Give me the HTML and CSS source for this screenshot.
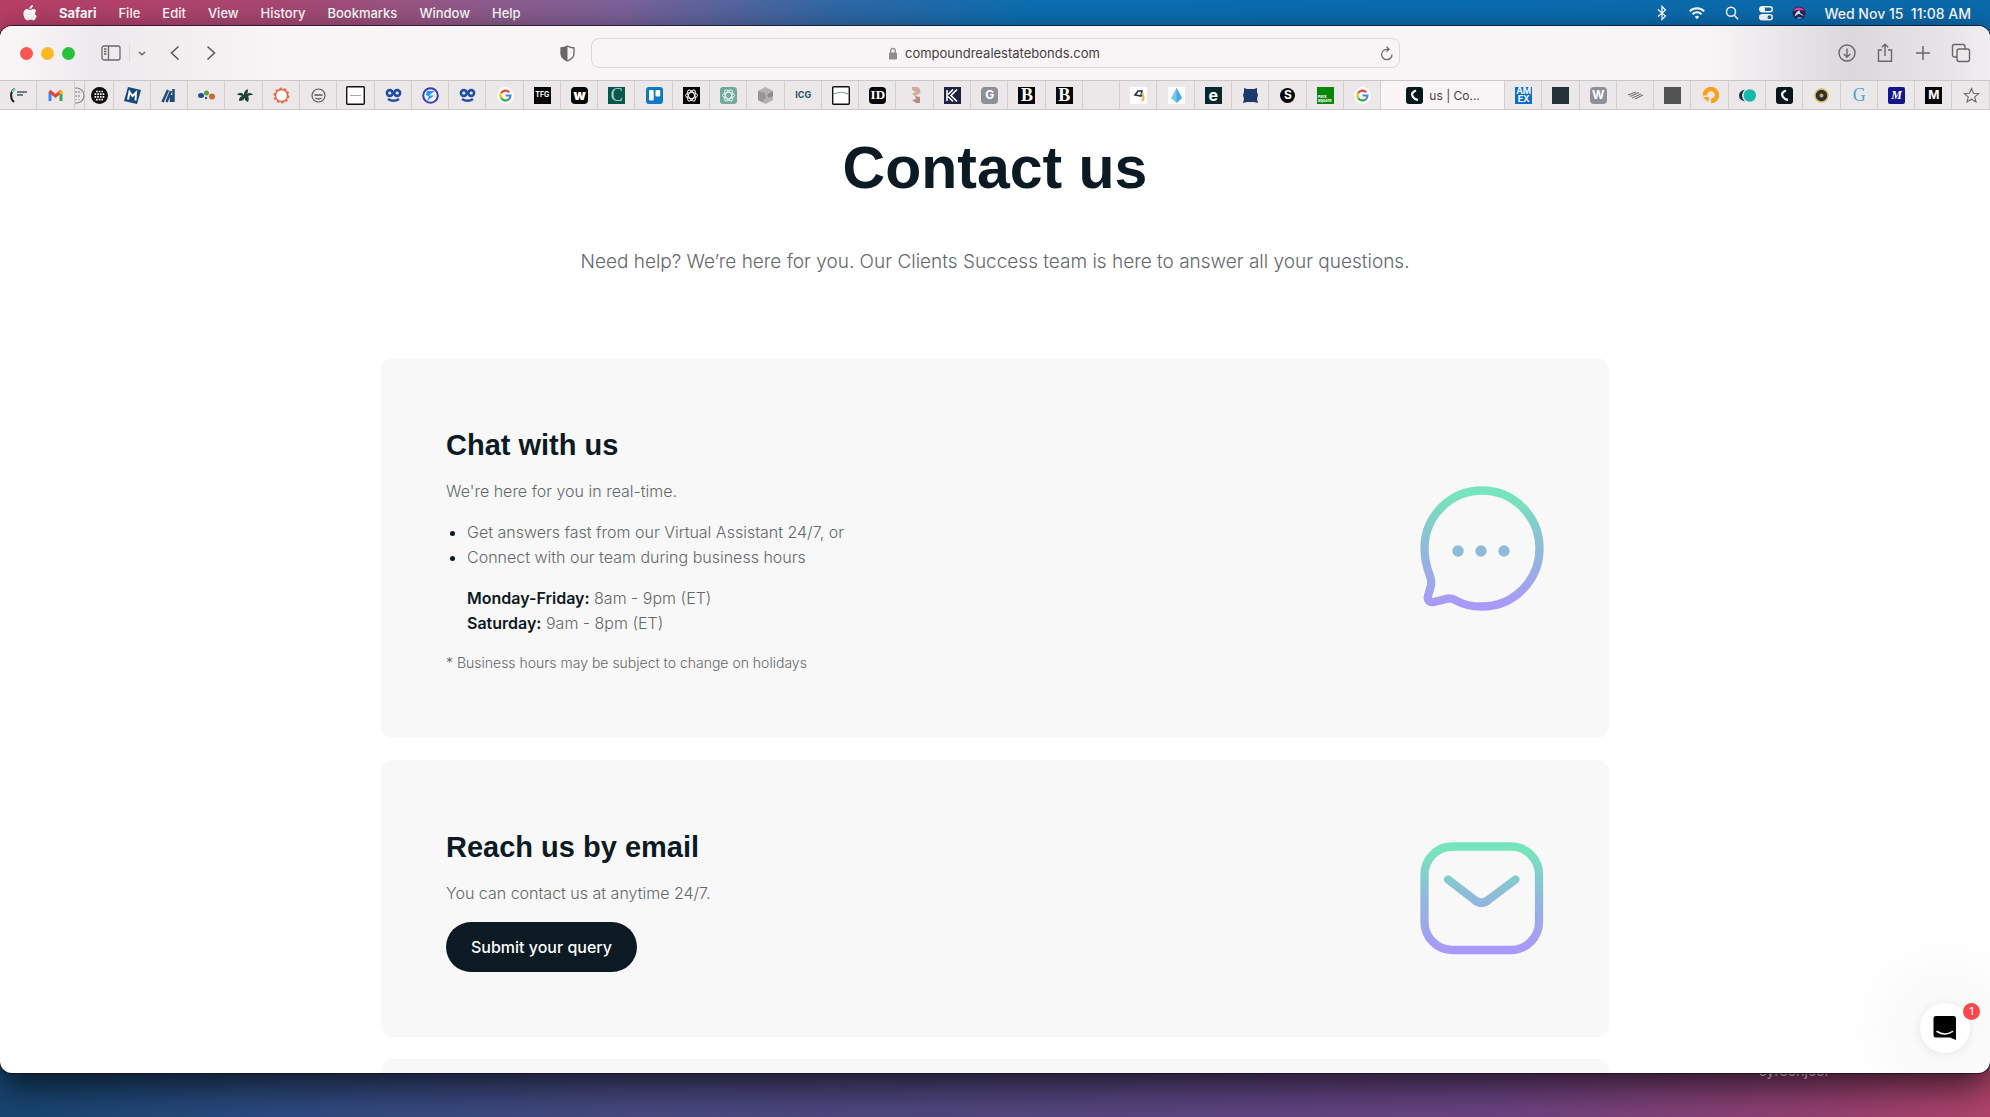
FILE: index.html
```html
<!DOCTYPE html>
<html lang="en">
<head>
<meta charset="utf-8">
<title>Contact us | Compound</title>
<link rel="stylesheet" href="styles.css">
</head>
<body>
<div class="desktop">
  <header class="menubar">
    <nav class="menus">
      <button class="menu" aria-label="Apple"><svg width="14" height="17" viewBox="0 0 14 17" fill="#fff"><path d="M9.900 0c.1 1.200-.4 2.200-1 2.900-.6.700-1.500 1.200-2.400 1.100C6.400 2.900 6.900 1.900 7.500 1.200 8.100.5 9.100.1 9.900 0ZM13.300 5.800c-1.800 1.200-1.700 4.200.5 5.100-.5 1.500-1.800 4.500-3.500 4.500-1.100 0-1.500-.7-2.800-.7s-1.800.7-2.800.7C2.600 15.500.4 11.800.4 8.700c0-3 1.900-4.600 3.700-4.600 1.200 0 2.200.8 3 .8.700 0 1.900-.9 3.300-.9 1.100 0 2.200.6 2.900 1.800Z"/></svg></button>
      <button class="menu menu-app">Safari</button>
      <button class="menu">File</button>
      <button class="menu">Edit</button>
      <button class="menu">View</button>
      <button class="menu">History</button>
      <button class="menu">Bookmarks</button>
      <button class="menu">Window</button>
      <button class="menu">Help</button>
    </nav>
    <div class="status">
      <svg width="16" height="16" viewBox="0 0 16 16" fill="none" stroke="#fff" stroke-width="1.300"><path d="M4 4.500l7.500 6.500L8 14.500v-13L11.500 5 4 11.500"/></svg>
      <svg width="18" height="14" viewBox="0 0 16 14" fill="none" stroke="#fff" stroke-width="2"><path d="M.8 5.200a10.300 10.300 0 0 1 14.400 0M3.500 8.200a6.400 6.400 0 0 1 9 0"/><path d="M8 13.200 5.700 10.800a3.300 3.300 0 0 1 4.600 0Z" fill="#fff" stroke="none"/></svg>
      <svg width="16" height="16" viewBox="0 0 16 16" fill="none" stroke="#fff" stroke-width="1.500"><circle cx="7" cy="6.800" r="4.500"/><path d="m10.300 10.300 3.700 4"/></svg>
      <svg width="16" height="16" viewBox="0 0 16 16"><rect x="1.700" y="1.700" width="12.600" height="5" rx="2.500" fill="none" stroke="#fff" stroke-width="1.400"/><circle cx="4.500" cy="4.200" r="2.500" fill="#fff"/><rect x="1" y="9" width="14" height="6.400" rx="3.200" fill="#fff"/><circle cx="11.500" cy="12.200" r="1.900" fill="#0c6cad"/></svg>
      <svg width="14" height="16" viewBox="0 0 16 16"><circle cx="8" cy="8" r="7.500" fill="#2b2358"/><path d="M1.500 6C3 1 11 0 14.300 5.500 11 4.500 5 4 1.500 6Z" fill="#e2409b"/><path d="M3 12c1-5 4-7 6-7-1 3 2 4 5 6-3 0-4-2-6-2s-3 2-5 3Z" fill="#d9f4ff"/><path d="M5 14c2-2 5-2 7-.5-2 1.900-5 2-7 .5Z" fill="#35a6e8"/></svg>
      <time>Wed Nov 15&nbsp; 11:08 AM</time>
    </div>
  </header>

  <div class="desktop-item">cyroonjoor</div>

  <section class="window">
    <div class="toolbar">
      <div class="toolbar-left">
        <div class="lights"><button class="light close" aria-label="Close"></button><button class="light minimise" aria-label="Minimise"></button><button class="light zoom" aria-label="Zoom"></button></div>
        <div class="sidebar-tools">
          <button class="tool" aria-label="Sidebar"><svg width="20" height="16" viewBox="0 0 20 16" fill="none" stroke="#6a6668" stroke-width="1.300"><rect x="1" y="1" width="18" height="14" rx="2"/><path d="M7.500 1v14M3 4h2.500M3 6.500h2.500M3 9h2.500"/></svg></button>
          <span class="rule"></span>
          <button class="tool" aria-label="Tab groups"><svg width="8" height="5" viewBox="0 0 8 5" fill="none" stroke="#6a6668" stroke-width="1.500"><path d="m1 1 3 2.700L7 1"/></svg></button>
        </div>
        <div class="history-tools">
          <button class="tool" aria-label="Back"><svg width="10" height="16" viewBox="0 0 10 16" fill="none" stroke="#5d595b" stroke-width="1.600"><path d="M8.500 1.500 1.500 8l7 6.500"/></svg></button>
          <button class="tool" aria-label="Forward"><svg width="10" height="16" viewBox="0 0 10 16" fill="none" stroke="#5d595b" stroke-width="1.600"><path d="m1.500 1.500 7 6.500-7 6.500"/></svg></button>
        </div>
        <button class="tool privacy" aria-label="Privacy report"><svg width="15" height="17" viewBox="0 0 15 17"><path d="M7.500 1C5.500 2.300 3.500 2.800 1 3v5.500c0 3.500 3 6 6.500 7.500C11 14.500 14 12 14 8.500V3c-2.500-.2-4.500-.7-6.500-2Z" fill="none" stroke="#6a6668" stroke-width="1.300"/><path d="M7.500 1C5.500 2.300 3.500 2.800 1 3v5.500c0 3.500 3 6 6.500 7.500Z" fill="#6a6668"/></svg></button>
      </div>
      <form class="address">
        <svg class="lock" width="10" height="13" viewBox="0 0 10 13"><rect x="1" y="5.500" width="8" height="7" rx="1.200" fill="#8f8b8d"/><path d="M2.700 6V3.600a2.300 2.300 0 0 1 4.600 0V6" fill="none" stroke="#8f8b8d" stroke-width="1.300"/></svg>
        <input type="text" aria-label="Address" value="compoundrealestatebonds.com">
        <button type="button" class="tool reload" aria-label="Reload"><svg width="14" height="15" viewBox="0 0 14 15" fill="none" stroke="#6a6668" stroke-width="1.200"><path d="M12 8.200A5.200 5.200 0 1 1 6.800 3.300h2M6.500.8l2.600 2.500-2.600 2.500"/></svg></button>
      </form>
      <div class="toolbar-right">
        <button class="tool" aria-label="Downloads"><svg width="20" height="20" viewBox="0 0 20 20" fill="none" stroke="#6a6668" stroke-width="1.400"><circle cx="10" cy="10" r="8"/><path d="M10 5.500v8.500M6.800 11l3.200 3.200L13.200 11"/></svg></button>
        <button class="tool" aria-label="Share"><svg width="20" height="20" viewBox="0 0 20 20" fill="none" stroke="#6a6668" stroke-width="1.400"><path d="M7 7H3.500v11.300h13V7H13M10 13V1.300M6.800 4.300 10 1.200l3.200 3.100"/></svg></button>
        <button class="tool" aria-label="New tab"><svg width="20" height="20" viewBox="0 0 20 20" fill="none" stroke="#6a6668" stroke-width="1.500"><path d="M10 3v14M3 10h14"/></svg></button>
        <button class="tool" aria-label="Show all tabs"><svg width="20" height="20" viewBox="0 0 20 20" fill="none" stroke="#6a6668" stroke-width="1.400"><rect x="6" y="6" width="12.500" height="12.500" rx="2"/><path d="M6 14H3.500a2 2 0 0 1-2-2V3.500a2 2 0 0 1 2-2H12a2 2 0 0 1 2 2V6"/></svg></button>
      </div>
    </div>

    <nav class="tabs">
      <button class="tab"><svg width="17" height="17" viewBox="0 0 17 17"><path d="M5 2C0 4 0 12 4 15" fill="none" stroke="#1c1f22" stroke-width="2"/><path d="M5 2 2 5" stroke="#7cdcc0" stroke-width="2"/><path d="M7 5h10M7 8h6" stroke="#4b5a5c" stroke-width="1.600"/></svg></button>
      <button class="tab"><svg width="17" height="17" viewBox="0 0 17 17" fill="none" stroke-width="3"><path d="M3 14V5" stroke="#4285f4"/><path d="M14 14V5" stroke="#34a853"/><path d="m2.500 4 6 5 6-5" stroke="#ea4335"/><path d="M14 7V4" stroke="#fbbc04"/></svg></button>
      <button class="tab tab-clipped"><svg width="17" height="17" viewBox="0 0 17 17" fill="none" stroke="#8b8789" stroke-width="1.200"><circle cx="8.500" cy="8.500" r="7.500"/><path d="M8 4v9M11 4v9" stroke-dasharray="2 2"/></svg></button>
      <button class="tab tab-narrow"><svg width="17" height="17" viewBox="0 0 17 17"><circle cx="8.500" cy="8.500" r="8.500" fill="#0c0c0c"/><path d="M5 4.500h7M3.500 7.200h10M3.500 9.900h10M5 12.600h7" stroke="#fff" stroke-width="1.700" stroke-dasharray="1.700 1"/></svg></button>
      <button class="tab"><svg width="17" height="17" viewBox="0 0 17 17"><path d="m4 0 13 3-4 14-13-3Z" fill="#164a7c"/><path d="M4 12.500 5.500 5l3 4L12 5.500l-.5 8" fill="none" stroke="#fff" stroke-width="2"/></svg></button>
      <button class="tab"><svg width="17" height="17" viewBox="0 0 17 17" stroke="#1d4e79" stroke-width="2.500"><path d="M1.500 15 7 3M5.500 15 10 4M10 15V8M12.500 2v13"/></svg></button>
      <button class="tab"><svg width="17" height="17" viewBox="0 0 17 17"><ellipse cx="3" cy="8.500" rx="3" ry="2.500" fill="#1e4f8f"/><circle cx="8.500" cy="6" r="2.500" fill="#57a33b"/><ellipse cx="14" cy="9.500" rx="3" ry="3" fill="#c86b32"/><circle cx="8" cy="11" r="1.200" fill="#1e4f8f"/></svg></button>
      <button class="tab"><svg width="17" height="17" viewBox="0 0 17 17" fill="#1f4435"><path d="M1 8c2-3 5-3 7 0 0-4 2-5 4-6 0 2 0 3-1 5 2-2 5-1 6 1-2 0-4 0-5 1 1 1 1 4 0 6-3-1-4-3-3-5-1 3-3 4-6 4 0-3 1-4 3-5-1-.7-3-1-5-1Z"/></svg></button>
      <button class="tab"><svg width="17" height="17" viewBox="0 0 17 17"><circle cx="8.500" cy="8.500" r="6" fill="#fff" stroke="#e8663c" stroke-width="1.500"/><circle cx="8.500" cy="8.500" r="7.200" fill="none" stroke="#e8663c" stroke-width="1.500" stroke-dasharray="2.500 2"/></svg></button>
      <button class="tab"><svg width="15" height="15" viewBox="0 0 15 15"><circle cx="7.500" cy="7.500" r="6.500" fill="#eee9eb" stroke="#555" stroke-width="1.100"/><path d="M3.500 7h8M4.500 10q3 2 6 0" fill="none" stroke="#555" stroke-width="1.400"/></svg></button>
      <button class="tab"><svg width="19" height="19" viewBox="0 0 19 19"><rect x=".7" y=".7" width="17.600" height="17.600" rx="1" fill="#fff" stroke="#111" stroke-width="1.400"/><path d="M4 9.500h11" stroke="#aaa"/></svg></button>
      <button class="tab"><svg width="17" height="17" viewBox="0 0 17 17" fill="none" stroke="#1f4fa3" stroke-width="2.600"><circle cx="4.800" cy="6" r="2.900"/><circle cx="12.200" cy="6" r="2.900"/><path d="M3 12q5.500 3.500 11 0"/></svg></button>
      <button class="tab"><svg width="17" height="17" viewBox="0 0 17 17"><circle cx="8.500" cy="8.500" r="7.300" fill="#f3f0ff" stroke="#3c35c9" stroke-width="2"/><path d="M5 4h7.500L7 8.500h5L5 14l2-4.500L4 8Z" fill="#1e9cf0"/></svg></button>
      <button class="tab"><svg width="17" height="17" viewBox="0 0 17 17" fill="none" stroke="#1f4fa3" stroke-width="2.600"><circle cx="4.800" cy="6" r="2.900"/><circle cx="12.200" cy="6" r="2.900"/><path d="M3 12q5.500 3.500 11 0"/></svg></button>
      <button class="tab"><svg width="17" height="17" viewBox="0 0 17 17" fill="none" stroke-width="2.200"><circle cx="8.500" cy="8.500" r="8.500" fill="#fff"/><path d="M12.200 5.200A5 5 0 0 0 4.200 6" stroke="#ea4335"/><path d="M4.200 6a5 5 0 0 0 0 5" stroke="#fbbc05"/><path d="M4.200 11a5 5 0 0 0 7.500 1.300" stroke="#34a853"/><path d="M11.700 12.300a5 5 0 0 0 1.800-3.800H8.500" stroke="#4285f4"/></svg></button>
      <button class="tab"><span class="fav black tiny">TFG</span></button>
      <button class="tab"><span class="fav black round heavy">w</span></button>
      <button class="tab"><span class="fav teal serif">C</span></button>
      <button class="tab"><svg width="17" height="17" viewBox="0 0 17 17"><rect width="17" height="17" rx="3" fill="#0c7ac7"/><rect x="3" y="3" width="4.700" height="10.500" rx="1" fill="#fff"/><rect x="9.500" y="3" width="4.700" height="6.500" rx="1" fill="#fff"/></svg></button>
      <button class="tab"><svg width="17" height="17" viewBox="0 0 17 17"><rect width="17" height="17" fill="#050505"/><g fill="none" stroke="#fff" stroke-width="1"><ellipse cx="8.500" cy="8.500" rx="6" ry="3"/><ellipse cx="8.500" cy="8.500" rx="6" ry="3" transform="rotate(60 8.500 8.500)"/><ellipse cx="8.500" cy="8.500" rx="6" ry="3" transform="rotate(120 8.500 8.500)"/></g></svg></button>
      <button class="tab"><svg width="17" height="17" viewBox="0 0 17 17"><rect width="17" height="17" rx="3" fill="#74aa9c"/><g fill="none" stroke="#e9f6f1" stroke-width="1"><ellipse cx="8.500" cy="8.500" rx="6" ry="3"/><ellipse cx="8.500" cy="8.500" rx="6" ry="3" transform="rotate(60 8.500 8.500)"/><ellipse cx="8.500" cy="8.500" rx="6" ry="3" transform="rotate(120 8.500 8.500)"/></g></svg></button>
      <button class="tab"><svg width="17" height="17" viewBox="0 0 17 17"><path d="m8.500 0 7.500 4v9l-7.500 4L1 13V4Z" fill="#b5b1b2"/><path d="m1 4 7 2 1 5-4 4-4-2Z" fill="#999597"/><path d="m10 8 6-4v5l-4 2Z" fill="#8c888a"/></svg></button>
      <button class="tab"><span class="fav wordmark">ICG</span></button>
      <button class="tab"><svg width="18" height="19" viewBox="0 0 18 19"><rect x=".7" y=".7" width="16.600" height="17.600" rx="1" fill="#fff" stroke="#111" stroke-width="1.400"/><path d="M2 8q7-3.500 14 0" fill="none" stroke="#7e9db5" stroke-width="1.200"/></svg></button>
      <button class="tab"><span class="fav black round slab">ID</span></button>
      <button class="tab"><svg width="17" height="17" viewBox="0 0 17 17"><path d="M5 0h4a4 4 0 0 1 3 7L8 9 5 7l4-2-4-2Z" fill="#d2a99d"/><path d="m8 9 5 1v6H9l-4-3 4-1Z" fill="#b98a7f"/></svg></button>
      <button class="tab"><svg width="17" height="17" viewBox="0 0 17 17"><rect width="17" height="17" fill="#1e2340"/><path d="M3 3v11M13 2.500 7 8.500l6 6M9 2.500 4 7.500M9 14.500 4 9.500" fill="none" stroke="#fff" stroke-width="1.600"/></svg></button>
      <button class="tab"><span class="fav grey round">G</span></button>
      <button class="tab"><span class="fav black serif bold">B</span></button>
      <button class="tab"><span class="fav black serif bold">B</span></button>
      <button class="tab" aria-label="Untitled"></button>
      <button class="tab"><svg width="17" height="17" viewBox="0 0 17 17"><rect width="17" height="17" fill="#fff"/><path d="m5 8 3-4 4 0-1 5Z" fill="none" stroke="#20304a" stroke-width="1.600"/><path d="M12 6q3 5 0 8" fill="none" stroke="#f4b53f" stroke-width="2.200"/></svg></button>
      <button class="tab"><svg width="17" height="17" viewBox="0 0 17 17"><rect width="17" height="17" fill="#fff"/><path d="m8.500 1 5.500 10-5.500 5L3 11Z" fill="#7cc7ee"/><path d="m8.500 1 5.500 10-5.500 5Z" fill="#4aa9dc"/></svg></button>
      <button class="tab"><span class="fav ink">e</span></button>
      <button class="tab"><svg width="17" height="17" viewBox="0 0 17 17"><path d="m2 1 3 1h7l3-1v4l1 3-1 4 1 4-4-1H5l-4 1 1-4-1-4 1-3Z" fill="#1d3a6c"/></svg></button>
      <button class="tab"><span class="fav black disc">S</span></button>
      <button class="tab"><span class="fav green"><span>Park</span><span>Square</span></span></button>
      <button class="tab"><svg width="17" height="17" viewBox="0 0 17 17" fill="none" stroke-width="2.200"><circle cx="8.500" cy="8.500" r="8.500" fill="#fff"/><path d="M12.200 5.200A5 5 0 0 0 4.200 6" stroke="#ea4335"/><path d="M4.200 6a5 5 0 0 0 0 5" stroke="#fbbc05"/><path d="M4.200 11a5 5 0 0 0 7.500 1.300" stroke="#34a853"/><path d="M11.700 12.300a5 5 0 0 0 1.800-3.800H8.500" stroke="#4285f4"/></svg></button>
      <button class="tab tab-active"><svg width="17" height="17" viewBox="0 0 17 17"><rect width="17" height="17" rx="3" fill="#07171c"/><path d="M10 3.500Q4 6 7 10q1.500 2.500 5 3" fill="none" stroke="#e8f4f2" stroke-width="2.400"/></svg>us | Co...</button>
      <button class="tab"><span class="fav blue"><span>AM</span><span>EX</span></span></button>
      <button class="tab"><span class="fav slate"></span></button>
      <button class="tab"><span class="fav grey round">W</span></button>
      <button class="tab"><svg width="17" height="17" viewBox="0 0 17 17" stroke="#77757a" stroke-width="1.200"><path d="m1 8 8-3M3 9.500l9-4M5 11l9-4M8 12l8-4"/></svg></button>
      <button class="tab"><span class="fav stone"></span></button>
      <button class="tab"><svg width="17" height="17" viewBox="0 0 17 17"><path d="M3 8.500A6 6 0 1 1 9 14" fill="none" stroke="#f9a11b" stroke-width="4.500"/><path d="M1 10h6l-1 5Z" fill="#f9a11b"/></svg></button>
      <button class="tab"><svg width="17" height="17" viewBox="0 0 17 17"><path d="M6 2.500Q0 4 0 8.500T6 14.500Q3 12 3 8.500t3-6Z" fill="#15323a"/><circle cx="10.800" cy="8.500" r="6.200" fill="#14b8ac"/></svg></button>
      <button class="tab"><svg width="17" height="17" viewBox="0 0 17 17"><rect width="17" height="17" rx="3" fill="#07171c"/><path d="M10 3.500Q4 6 7 10q1.500 2.500 5 3" fill="none" stroke="#e8f4f2" stroke-width="2.400"/></svg></button>
      <button class="tab"><svg width="17" height="17" viewBox="0 0 17 17"><circle cx="8.500" cy="8.500" r="6.500" fill="#2c2e3c" stroke="#d5bf4e" stroke-width="1.500"/><circle cx="8.500" cy="8.500" r="2" fill="#c7b04c"/></svg></button>
      <button class="tab"><span class="fav sky serif">G</span></button>
      <button class="tab"><span class="fav navy">M</span></button>
      <button class="tab"><span class="fav black">M</span></button>
      <button class="tab"><svg width="17" height="16" viewBox="0 0 17 16" fill="none" stroke="#6a6668" stroke-width="1.100"><path d="m8.500 1.500 2 4.700 5.200.4-4 3.300 1.300 5-4.500-2.700L4 14.900l1.300-5-4-3.300 5.200-.4Z"/></svg></button>
    </nav>

    <main class="page">
      <h1>Contact us</h1>
      <p class="lead">Need help? We’re here for you. Our Clients Success team is here to answer all your questions.</p>
      <div class="cards">
        <article class="card">
          <div>
            <h2>Chat with us</h2>
            <p>We're here for you in real-time.</p>
            <ul>
              <li><span>Get answers fast from our Virtual Assistant 24/7, or</span></li>
              <li><span>Connect with our team during business hours</span></li>
            </ul>
            <p class="hours"><b>Monday-Friday:</b> 8am - 9pm (ET)<br><b>Saturday:</b> 9am - 8pm (ET)</p>
            <p class="note">* Business hours may be subject to change on holidays</p>
          </div>
          <svg width="124" height="125" viewBox="0 0 124 125" fill="none">
            <defs><linearGradient id="chat-ink" gradientUnits="userSpaceOnUse" x1="0" y1="4" x2="0" y2="120"><stop offset=".05" stop-color="#76e5bb"/><stop offset=".45" stop-color="#8cbfd6"/><stop offset="1" stop-color="#aa98fa"/></linearGradient></defs>
            <path d="M4.500 62.500A57.500 58 0 1 1 62 120.500C52 120.500 44 119 37 115 33 112.500 30 111.500 26 113L14 116C9.500 117 7 114 8 110L11 99C11.500 96 11 93 10 90 6.500 81 4.500 72 4.500 62.500Z" stroke="url(#chat-ink)" stroke-width="8.300"/>
            <g fill="#8fbbdb"><circle cx="38" cy="65" r="5.700"/><circle cx="61" cy="65" r="5.700"/><circle cx="84" cy="65" r="5.700"/></g>
          </svg>
        </article>
        <article class="card">
          <div>
            <h2>Reach us by email</h2>
            <p>You can contact us at anytime 24/7.</p>
            <button class="submit">Submit your query</button>
          </div>
          <svg width="124" height="113" viewBox="0 0 124 113" fill="none" stroke="url(#mail-ink)" stroke-width="8.300">
            <defs><linearGradient id="mail-ink" gradientUnits="userSpaceOnUse" x1="0" y1="4" x2="0" y2="108"><stop offset=".05" stop-color="#76e5bb"/><stop offset=".5" stop-color="#8fb9dc"/><stop offset="1" stop-color="#aa98fa"/></linearGradient></defs>
            <rect x="4.500" y="4.500" width="114.500" height="103.500" rx="28"/>
            <path d="M28 37.500 54 57.500Q61.500 64 69 57.500L95.500 37.500" stroke-linecap="round"/>
          </svg>
        </article>
        <article class="card"></article>
      </div>
      <button class="messenger" aria-label="Open messenger">
        <svg width="24" height="26" viewBox="0 0 24 26"><path d="M3 1h17.500a2.500 2.500 0 0 1 2.500 2.500V25l-6-2.500H3A2.500 2.500 0 0 1 .5 20V3.500A2.500 2.500 0 0 1 3 1Z"/><path d="M4 16.500q8 5 15.500 0" fill="none" stroke="#fff" stroke-width="1.500" stroke-linecap="round"/></svg>
        <span class="badge">1</span>
      </button>
    </main>
  </section>
</div>
</body>
</html>
```
FILE: styles.css
```css
* { box-sizing: border-box; }
body { margin: 0; font-family: Inter, "Liberation Sans", sans-serif; }
button, input { font: inherit; color: inherit; border: 0; padding: 0; background: none; }
h1, h2, p, ul { margin: 0; padding: 0; }
h1, h2 { font-family: "Liberation Sans", Arial, sans-serif; font-weight: 700; }
svg { display: block; flex: none; }

.desktop {
  position: relative;
  display: flex;
  flex-direction: column;
  height: 100vh;
  padding-bottom: 44px;
  overflow: hidden;
  background:
    linear-gradient(90deg, #b83f66 0, #a94872 14%, #8f5b8c 24%, #7d6299 31%, #2f69a6 42%, #0b6fb2 52%, #0b6aac 100%) top / 100% 40px no-repeat,
    linear-gradient(90deg, #174571 0, #2c4a80 14%, #48497f 32%, #50477f 48%, #6a4382 75%, #954070 92%, #b0446a 100%);
}

/* Menu bar */
.menubar {
  display: flex;
  justify-content: space-between;
  align-items: center;
  height: 26px;
  padding: 0 19px 0 23px;
  color: #fff;
  font-size: 13px;
  font-weight: 500;
}
.menus { display: flex; align-items: center; gap: 22px; }
.menu-app { font-weight: 700; }
.status { display: flex; align-items: center; gap: 18px; font-size: 14px; }

.desktop-item {
  position: absolute;
  right: 160px;
  bottom: 38px;
  color: #fff;
  font-size: 14px;
  line-height: 16px;
}

/* Browser window */
.window {
  position: relative;
  display: flex;
  flex-direction: column;
  flex: 1;
  min-height: 0;
  overflow: hidden;
  border-radius: 12px;
  background: #fff;
  box-shadow: 0 0 0 1px rgba(20, 10, 30, .7), 0 12px 36px rgba(0, 0, 0, .7);
}
.toolbar {
  display: grid;
  grid-template-columns: 591fr 809fr 590fr;
  align-items: center;
  height: 54px;
  flex: none;
  background:
    linear-gradient(90deg, transparent 1%, rgba(226, 222, 226, .5) 5%, transparent 14%),
    linear-gradient(90deg, transparent 86%, #dcd7dc 93%, #e9e4e8 98%, #f2edf0 100%) #f9f4f6;
}
.toolbar-left { display: flex; align-items: center; padding: 0 16px 0 20px; }
.lights { display: flex; gap: 8px; }
.light { width: 13px; height: 13px; border-radius: 50%; }
.close { background: #fc5650; }
.minimise { background: #fdb827; }
.zoom { background: #28c13c; }
.sidebar-tools { display: flex; align-items: center; gap: 8px; margin-left: 26px; }
.rule { width: 1px; height: 18px; background: #ded9db; }
.history-tools { display: flex; gap: 26px; margin-left: 24px; }
.privacy { margin-left: auto; }
.address {
  position: relative;
  display: flex;
  justify-content: center;
  align-items: center;
  gap: 7px;
  height: 30px;
  border: 1px solid #dcd6d9;
  border-radius: 8px;
  color: #454143;
  font-size: 13px;
}
.address input { width: 198px; outline: 0; }
.reload { position: absolute; right: 5px; }
.toolbar-right { display: flex; justify-content: flex-end; gap: 18px; padding-right: 19px; }

.tabs {
  display: flex;
  flex: none;
  height: 30px;
  border-top: 1px solid #cbc6c8;
  border-bottom: 1px solid #cfcacc;
  background: #ece7e9;
}
.tab {
  display: flex;
  flex: 373 1 0;
  align-items: center;
  justify-content: center;
  min-width: 0;
  overflow: hidden;
  box-shadow: inset -1px 0 #d3ced0;
}
.tab-clipped { flex-grow: 100; justify-content: flex-end; }
.tab-narrow { flex-grow: 290; }
.tab-active {
  flex-grow: 1240;
  gap: 6px;
  background: #f9f4f6;
  color: #454143;
  font-size: 12px;
}
.fav {
  display: flex;
  flex-direction: column;
  align-items: center;
  justify-content: center;
  width: 17px;
  height: 17px;
  color: #fff;
  font-size: 12px;
  font-weight: 700;
  line-height: 16px;
}
.black { background: #060606; }
.teal { background: #05564d; color: #b5d6cb; }
.grey { background: #8e9099; }
.ink { background: #06282e; font-size: 16px; }
.green { background: #078707; align-items: flex-start; justify-content: flex-end; padding: 1px; font-size: 4px; line-height: 4px; }
.blue { background: #0b6dcb; font-size: 9px; line-height: 8px; overflow: hidden; }
.slate { background: #25323a; }
.stone { background: #4f5352; }
.navy { background: #14148c; font-family: "Liberation Serif", serif; font-style: italic; border-radius: 2px; }
.sky { color: #3fa9d5; }
.wordmark { color: #1e5560; font-size: 9px; }
.tiny { font-size: 7px; }
.heavy { font-size: 14px; font-weight: 900; }
.round { border-radius: 4px; }
.disc { border-radius: 50%; width: 15px; height: 15px; }
.serif { font-family: "Liberation Serif", serif; font-size: 18px; font-weight: 400; }
.slab { font-family: "Liberation Serif", serif; font-size: 13px; }
.bold { font-weight: 700; }

/* Contact page */
.page {
  flex: 1;
  min-height: 0;
  overflow: hidden;
  padding: 23px 24px 0;
  color: #0b1a23;
  text-align: center;
}
h1 { font-size: 59px; line-height: 70px; }
.lead { margin-top: 44px; color: #63686b; font-size: 19px; line-height: 30px; font-weight: 300; }
.cards { display: flex; flex-direction: column; gap: 22px; max-width: 1228px; margin: 81px auto 0; text-align: left; }
.card {
  display: flex;
  justify-content: space-between;
  align-items: center;
  min-height: 277px;
  padding: 65px;
  border-radius: 12px;
  background: #f8f8f8;
  color: #63686b;
  font-size: 16px;
  line-height: 25px;
  font-weight: 300;
}
h2 { margin-bottom: 12px; color: #0b1a23; font-size: 29px; line-height: 44px; }
.card ul { margin: 16px 0; padding-left: 21px; }
.card li { color: #0b1a23; }
.card li span { color: #63686b; }
.hours { padding-left: 21px; }
.hours b { color: #0b1a23; font-weight: 600; }
.note { margin-top: 16px; font-size: 14px; line-height: 21px; }
.submit {
  height: 50px;
  margin-top: 16px;
  padding: 0 25px;
  border-radius: 25px;
  background: #0b1a23;
  color: #fff;
  font-size: 16px;
  font-weight: 500;
}

.messenger {
  position: absolute;
  right: 20px;
  bottom: 20px;
  display: grid;
  place-items: center;
  width: 50px;
  height: 50px;
  border-radius: 50%;
  background: #fff;
  box-shadow: 0 1px 8px rgba(0, 0, 0, .08), 0 2px 90px 20px rgba(0, 0, 0, .07);
}
.badge {
  position: absolute;
  top: 0;
  right: -10px;
  width: 17px;
  height: 17px;
  border-radius: 50%;
  background: #fb4a4c;
  color: #fff;
  font-size: 11px;
  line-height: 17px;
}
```
